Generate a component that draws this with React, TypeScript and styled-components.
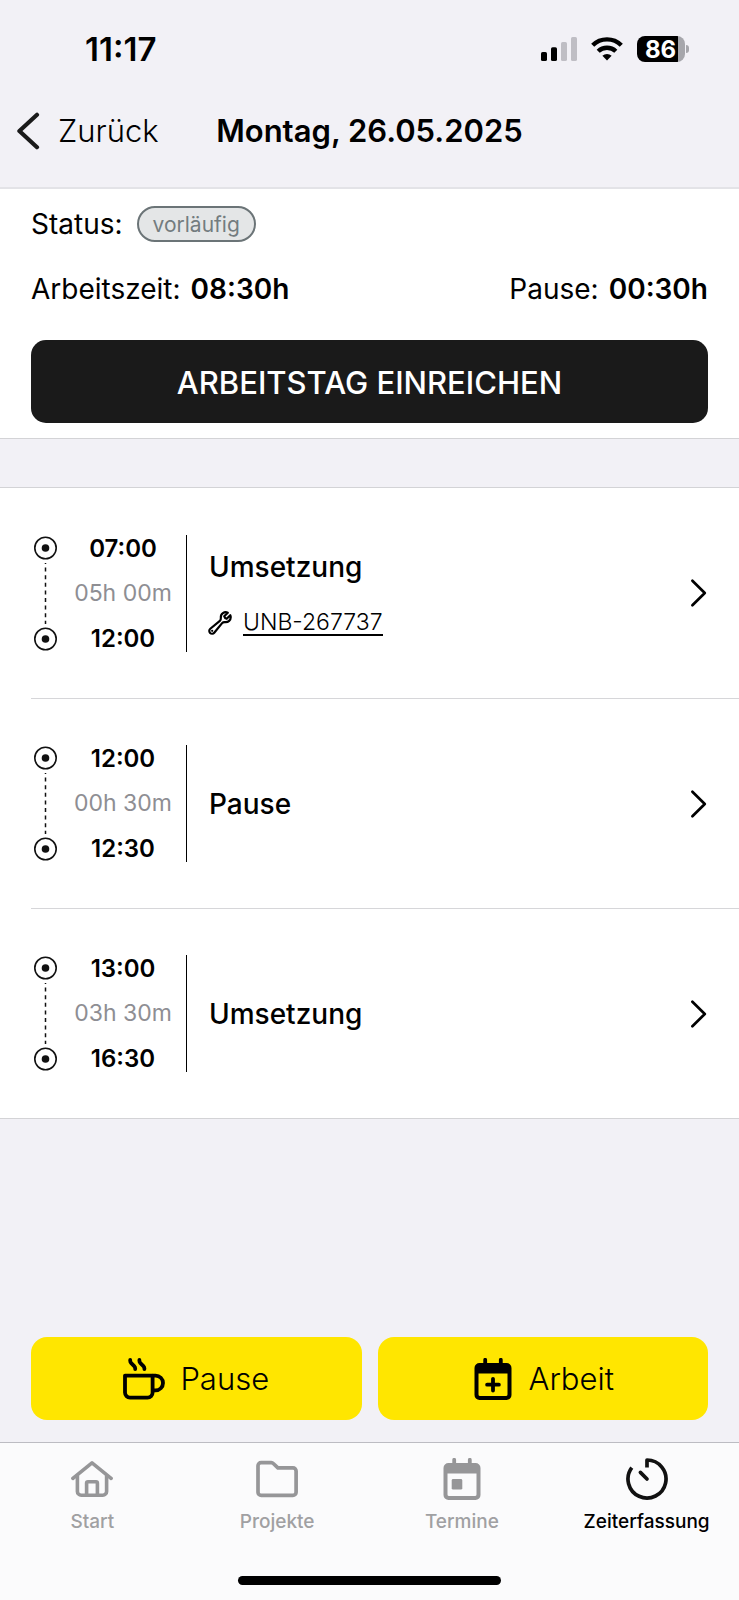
import React from "react";
import styled, { createGlobalStyle } from "styled-components";
import { HiOutlineWrench } from "react-icons/hi2";

const GlobalStyle = createGlobalStyle`
  * { box-sizing: border-box; }
  body {
    margin: 0;
    background: #f2f1f6;
    color: #000;
    font-family: Inter, "Liberation Sans", sans-serif;
  }
  button { font: inherit; color: inherit; border: 0; padding: 0; cursor: pointer; }
  a { color: inherit; text-decoration: none; }
  svg { display: block; flex: none; }
`;

const Screen = styled.div`
  display: flex;
  flex-direction: column;
  min-height: 100vh;
`;

const StatusBar = styled.div`
  display: flex;
  align-items: center;
  justify-content: space-between;
  height: 98px;
  padding: 0 50px 0 85px;
`;

const Clock = styled.time`
  font-size: 33px;
  font-weight: 600;
`;

const Indicators = styled.div`
  display: flex;
  align-items: center;
  gap: 14px;
`;

const Battery = styled.div`
  display: flex;
  align-items: center;
  gap: 1px;
`;

const BatteryLevel = styled.div`
  width: 48px;
  height: 26px;
  padding-left: 8px;
  border-radius: 8px;
  background: linear-gradient(to right, #000 41px, #a6a6ab 41px);
  color: #fff;
  font-size: 24px;
  font-weight: 700;
  line-height: 27px;
`;

const BatteryTip = styled.div`
  width: 3px;
  height: 8px;
  border-radius: 0 3px 3px 0;
  background: #a6a6ab;
`;

const Header = styled.header`
  display: grid;
  grid-template-columns: 1fr auto 1fr;
  align-items: center;
  height: 91px;
  padding: 0 16px 24px;
  border-bottom: 2px solid #e3e3e7;
`;

const BackButton = styled.button`
  justify-self: start;
  display: flex;
  align-items: center;
  gap: 18px;
  background: none;
  font-size: 31px;
  font-weight: 300;
`;

const Title = styled.h1`
  margin: 0;
  font-size: 31px;
  font-weight: 600;
  line-height: 40px;
`;

const Summary = styled.section`
  display: flex;
  flex-direction: column;
  padding: 15px 31px;
  background: #fff;
  border-bottom: 1px solid #d3d3d6;
`;

const SummaryRow = styled.div`
  display: flex;
  align-items: center;
  justify-content: space-between;
  height: 40px;
  font-size: 28px;
  font-weight: 400;
`;

const StatusRow = styled(SummaryRow)`
  justify-content: flex-start;
  gap: 14px;
`;

const Totals = styled(SummaryRow)`
  margin: 25px 0 31px;
`;

const Badge = styled.span`
  height: 36px;
  padding: 0 14px;
  border: 2px solid #6b7477;
  border-radius: 18px;
  background: #e4e6e7;
  color: #737c7f;
  font-size: 21px;
  line-height: 33px;
`;

const Total = styled.span`
  display: flex;
  gap: 10px;

  strong { font-weight: 600; }
`;

const SubmitButton = styled.button`
  height: 83px;
  padding-top: 2px;
  border-radius: 15px;
  background: #1a1a1a;
  color: #fff;
  font-size: 31px;
  font-weight: 500;
`;

const Entries = styled.ul`
  margin: 48px 0 0;
  padding: 0 0 0 31px;
  list-style: none;
  background: #fff;
  border: solid #d3d3d6;
  border-width: 1px 0;
`;

const Entry = styled.li`
  display: flex;
  align-items: center;
  height: 210px;
  padding-right: 31px;

  & + & { border-top: 1px solid #d6d6d9; }
`;

const Times = styled.div`
  display: flex;
  flex-direction: column;
  align-items: center;
  width: 126px;
  font-size: 24px;
  line-height: 45px;
`;

const Clocked = styled.time`
  font-weight: 600;
`;

const Duration = styled.span`
  color: #8e8e93;
  font-size: 23px;
  font-weight: 400;
`;

const Details = styled.div`
  flex: 1;
  display: flex;
  flex-direction: column;
  justify-content: center;
  gap: 27px;
  height: 117px;
  padding-left: 22px;
  border-left: 1px solid #000;
`;

const Activity = styled.span`
  font-size: 28px;
  font-weight: 500;
  line-height: 32px;
`;

const Order = styled.div`
  display: flex;
  align-items: center;
  gap: 12px;
  font-size: 23px;
  font-weight: 300;

  svg {
    overflow: visible;
    stroke-width: 2;
  }

  a {
    border-bottom: 2px solid #000;
    line-height: 24px;
  }
`;

const OpenButton = styled.button`
  background: none;
`;

const Actions = styled.div`
  display: grid;
  grid-template-columns: 1fr 1fr;
  gap: 16px;
  margin-top: auto;
  padding: 31px 31px 22px;
`;

const ActionButton = styled.button`
  display: flex;
  align-items: center;
  justify-content: center;
  gap: 15px;
  height: 83px;
  border-radius: 16px;
  background: #ffe600;
  font-size: 31px;
  font-weight: 300;
`;

const TabBar = styled.nav`
  height: 158px;
  padding-top: 15px;
  background: #fbfbfc;
  border-top: 1px solid #bcbcc2;
`;

const Tabs = styled.div`
  display: grid;
  grid-template-columns: repeat(4, 1fr);
`;

const Tab = styled.a<{ $active?: boolean }>`
  display: flex;
  flex-direction: column;
  align-items: center;
  gap: 9px;
  color: ${(p) => (p.$active ? "#000" : "#a0a0a2")};
  font-size: 19px;
  font-weight: 500;
  line-height: 26px;

  svg { color: ${(p) => (p.$active ? "#111" : "#969698")}; }
`;

const HomeIndicator = styled.div`
  width: 263px;
  height: 9px;
  margin: 41px auto 0;
  border-radius: 5px;
  background: #000;
`;

const Signal = () => (
  <svg width="36" height="24" viewBox="0 0 36 24" aria-hidden="true">
    <rect x="0" y="15" width="6" height="9" rx="1.6" />
    <rect x="10" y="10.3" width="6" height="13.7" rx="1.6" />
    <rect x="20" y="5" width="6" height="19" rx="1.6" fill="#bfbec4" />
    <rect x="30" y="0" width="6" height="24" rx="1.6" fill="#bfbec4" />
  </svg>
);

const Wifi = () => (
  <svg width="32" height="24" viewBox="0 0 32 24" fill="none" stroke="#000" strokeWidth="4.4" aria-hidden="true">
    <path d="M1.7 8.2a20.4 20.4 0 0 1 28.6 0" />
    <path d="M7.2 14.3a12.6 12.6 0 0 1 17.6 0" />
    <path d="M16 23.4l-4.6-4.6a6.6 6.6 0 0 1 9.2 0z" fill="#000" stroke="none" />
  </svg>
);

const BackChevron = () => (
  <svg width="24" height="38" viewBox="0 0 24 38" fill="none" stroke="#1a1a1a" strokeWidth="4.2" strokeLinecap="round" strokeLinejoin="round">
    <path d="M21 2.8L3.4 19L21 35.2" />
  </svg>
);

const Chevron = () => (
  <svg width="18" height="30" viewBox="0 0 18 30" fill="none" stroke="#000" strokeWidth="2.7" strokeLinecap="round" strokeLinejoin="round">
    <path d="M2.4 2.8L14.8 15L2.4 27.2" />
  </svg>
);

const Timeline = () => (
  <svg width="29" height="117" viewBox="0 0 29 117" fill="none" stroke="#111" aria-hidden="true">
    <circle cx="14.5" cy="13" r="10.7" strokeWidth="1.6" />
    <circle cx="14.5" cy="13" r="3.8" fill="#111" stroke="none" />
    <path d="M14.5 28V89" strokeWidth="1.5" strokeDasharray="4 3.6" strokeDashoffset="3" />
    <circle cx="14.5" cy="104" r="10.7" strokeWidth="1.6" />
    <circle cx="14.5" cy="104" r="3.8" fill="#111" stroke="none" />
  </svg>
);

const CoffeeIcon = () => (
  <svg width="42" height="42" viewBox="0 0 42 42" fill="none" stroke="#000" strokeWidth="3.8" strokeLinejoin="round">
    <path d="M2 17.6H29.6V34.6a5 5 0 0 1-5 5H7a5 5 0 0 1-5-5z" />
    <path d="M29.6 17.6h3a7.4 7.4 0 0 1 0 14.8h-3" />
    <path d="M7.2 2v.8c0 .9.4 1.7 1 2.3l3 3c.7.7 1 1.4 1 2.3v.6M16.4 2v.8c0 .9.4 1.7 1 2.3l3 3c.7.7 1 1.4 1 2.3v.6" strokeLinecap="round" />
  </svg>
);

const CalendarFrame = () => (
  <path
    fillRule="evenodd"
    fill="currentColor"
    d="M8.8 5V1.8a1.9 1.9 0 0 1 3.8 0V5H24.4V1.8a1.9 1.9 0 0 1 3.8 0V5H32a5 5 0 0 1 5 5V37a5 5 0 0 1-5 5H5a5 5 0 0 1-5-5V10a5 5 0 0 1 5-5zM4 15.6V36.4a1.6 1.6 0 0 0 1.6 1.6H31.4a1.6 1.6 0 0 0 1.6-1.6V15.6z"
  />
);

const CalendarPlusIcon = () => (
  <svg width="42" height="42" viewBox="-2.5 0 42 42">
    <CalendarFrame />
    <path d="M12.6 26.7H24.4M18.5 20.8V32.6" stroke="currentColor" strokeWidth="3.8" strokeLinecap="round" />
  </svg>
);

const CalendarIcon = () => (
  <svg width="42" height="42" viewBox="-2.5 0 42 42">
    <CalendarFrame />
    <rect x="8.2" y="21" width="10.6" height="10.6" rx="1.4" fill="currentColor" />
  </svg>
);

const HomeIcon = () => (
  <svg width="42" height="42" viewBox="0 0 42 42" fill="none" stroke="currentColor" strokeWidth="3.6" strokeLinecap="round" strokeLinejoin="round">
    <path d="M1.9 20.4L21 4.9L40.1 20.4" />
    <path d="M6.4 17.5V33.4a3.8 3.8 0 0 0 3.8 3.8H31.8a3.8 3.8 0 0 0 3.8-3.8V17.5" />
    <path d="M15.6 37V25.2a1.4 1.4 0 0 1 1.4-1.4h8a1.4 1.4 0 0 1 1.4 1.4V37" />
  </svg>
);

const FolderIcon = () => (
  <svg width="42" height="42" viewBox="0 0 42 42" fill="none" stroke="currentColor" strokeWidth="3.7" strokeLinejoin="round">
    <path d="M5.2 4.6H15.2a3 3 0 0 1 2.1.9L21.9 9.9H36.9a3.2 3.2 0 0 1 3.2 3.2V34.2a3.2 3.2 0 0 1-3.2 3.2H5.2A3.2 3.2 0 0 1 2 34.2V7.8a3.2 3.2 0 0 1 3.2-3.2z" />
  </svg>
);

const TimerIcon = () => (
  <svg width="42" height="42" viewBox="0 0 42 42" fill="none" stroke="currentColor" strokeWidth="3.7" strokeLinecap="round" strokeLinejoin="round">
    <path d="M21 9.6V2a19 19 0 1 1-15.2 7.6" strokeLinecap="butt" />
    <path d="M14.4 14.4L21 21" />
  </svg>
);

const entries = [
  { from: "07:00", duration: "05h 00m", to: "12:00", activity: "Umsetzung", order: "UNB-267737" },
  { from: "12:00", duration: "00h 30m", to: "12:30", activity: "Pause" },
  { from: "13:00", duration: "03h 30m", to: "16:30", activity: "Umsetzung" },
];

const tabs = [
  { label: "Start", Icon: HomeIcon },
  { label: "Projekte", Icon: FolderIcon },
  { label: "Termine", Icon: CalendarIcon },
  { label: "Zeiterfassung", Icon: TimerIcon, active: true },
];

export default function App() {
  return (
    <>
      <GlobalStyle />
      <Screen>
        <StatusBar>
          <Clock>11:17</Clock>
          <Indicators>
            <Signal />
            <Wifi />
            <Battery>
              <BatteryLevel>86</BatteryLevel>
              <BatteryTip />
            </Battery>
          </Indicators>
        </StatusBar>
        <Header>
          <BackButton>
            <BackChevron />
            Zurück
          </BackButton>
          <Title>Montag, 26.05.2025</Title>
        </Header>
        <main>
          <Summary>
            <StatusRow>
              Status:
              <Badge>vorläufig</Badge>
            </StatusRow>
            <Totals>
              <Total>
                Arbeitszeit: <strong>08:30h</strong>
              </Total>
              <Total>
                Pause: <strong>00:30h</strong>
              </Total>
            </Totals>
            <SubmitButton>ARBEITSTAG EINREICHEN</SubmitButton>
          </Summary>
          <Entries>
            {entries.map((e) => (
              <Entry key={e.from}>
                <Timeline />
                <Times>
                  <Clocked>{e.from}</Clocked>
                  <Duration>{e.duration}</Duration>
                  <Clocked>{e.to}</Clocked>
                </Times>
                <Details>
                  <Activity>{e.activity}</Activity>
                  {e.order && (
                    <Order>
                      <HiOutlineWrench size={22} viewBox="2 2 20 20" />
                      <a href="#order">{e.order}</a>
                    </Order>
                  )}
                </Details>
                <OpenButton aria-label={`${e.activity} ${e.from} öffnen`}>
                  <Chevron />
                </OpenButton>
              </Entry>
            ))}
          </Entries>
        </main>
        <Actions>
          <ActionButton>
            <CoffeeIcon />
            Pause
          </ActionButton>
          <ActionButton>
            <CalendarPlusIcon />
            Arbeit
          </ActionButton>
        </Actions>
        <TabBar>
          <Tabs>
            {tabs.map(({ label, Icon, active }) => (
              <Tab key={label} href={`#${label}`} $active={active} aria-current={active ? "page" : undefined}>
                <Icon />
                {label}
              </Tab>
            ))}
          </Tabs>
          <HomeIndicator />
        </TabBar>
      </Screen>
    </>
  );
}
